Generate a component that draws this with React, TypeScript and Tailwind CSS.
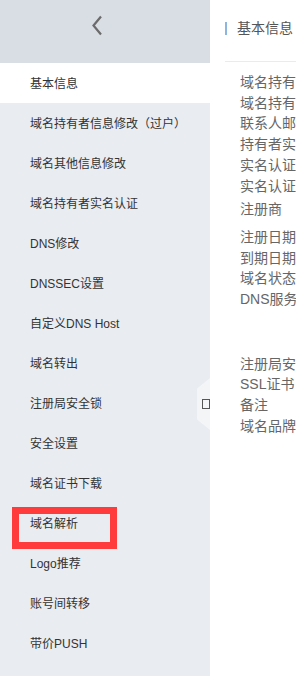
const menu = [
  "基本信息",
  "域名持有者信息修改（过户）",
  "域名其他信息修改",
  "域名持有者实名认证",
  "DNS修改",
  "DNSSEC设置",
  "自定义DNS Host",
  "域名转出",
  "注册局安全锁",
  "安全设置",
  "域名证书下载",
  "域名解析",
  "Logo推荐",
  "账号间转移",
  "带价PUSH",
];

const groups = [
  ["域名持有者", "域名持有者(英文)", "联系人邮箱", "持有者实名状态", "实名认证状态", "实名认证时间", "注册商"],
  ["注册日期", "到期日期", "域名状态", "DNS服务器"],
  ["注册局安全锁", "SSL证书", "备注", "域名品牌"],
];

export default function App() {
  return (
    <div
      className="relative flex h-[676px] w-[296px] overflow-hidden bg-white"
      style={{ fontFamily: '"Liberation Sans", "Noto Sans CJK SC", sans-serif' }}
    >
      {/* sidebar */}
      <aside className="flex w-[210px] shrink-0 flex-col bg-[#e9ecf1]">
        <div className="flex h-[63px] items-start bg-[#d9dde4] pl-[91px] pt-[15px]">
          <svg width="12" height="21" viewBox="0 0 12 21" fill="none">
            <path d="M10 1.5 L2.5 10.5 L10 19.5" stroke="#6b6b6b" strokeWidth="2.2" />
          </svg>
        </div>
        {menu.map((item, i) => (
          <div
            key={item}
            className={
              "flex h-10 shrink-0 items-center pl-[30px] pt-[2px] text-[12px] text-[#333] " +
              (i === 0 ? "bg-white" : "")
            }
          >
            {item}
          </div>
        ))}
      </aside>

      {/* content */}
      <main className="min-w-0 flex-1 overflow-hidden whitespace-nowrap pl-[15px]">
        <div className="flex h-[62px] items-start border-b border-[#ebebeb] pt-[22px]">
          <span className="h-[13px] w-[2px] bg-[#8cb6e1]" />
          <span className="ml-[10px] -mt-[2px] text-[14px] leading-[17px] text-[#555]">基本信息</span>
        </div>
        <div className="pl-[15px] pt-[10px] text-[14px] leading-[20.7px] text-[#666]">
          <div className="flex flex-col">
            {groups[0].map((t) => (
              <div key={t} className={t === "注册商" ? "mt-[3px]" : ""}>{t}</div>
            ))}
          </div>
          <div className="mt-[7px] flex flex-col">
            {groups[1].map((t) => (
              <div key={t}>{t}</div>
            ))}
          </div>
          <div className="mt-[44px] flex flex-col">
            {groups[2].map((t) => (
              <div key={t}>{t}</div>
            ))}
          </div>
        </div>
      </main>

      {/* collapse handle */}
      <div className="absolute left-[197px] top-[378px] flex h-[52px] w-[13px] items-center justify-end bg-[#f4f5f7] [clip-path:polygon(100%_0,100%_100%,0_80%,0_20%)]">
        <span className="h-[10px] w-[8px] border border-[#555]" />
      </div>

      {/* highlight box */}
      <div className="absolute left-[12px] top-[507px] h-[42px] w-[105px] border-[7px] border-[#ff3b3b]" />
    </div>
  );
}
